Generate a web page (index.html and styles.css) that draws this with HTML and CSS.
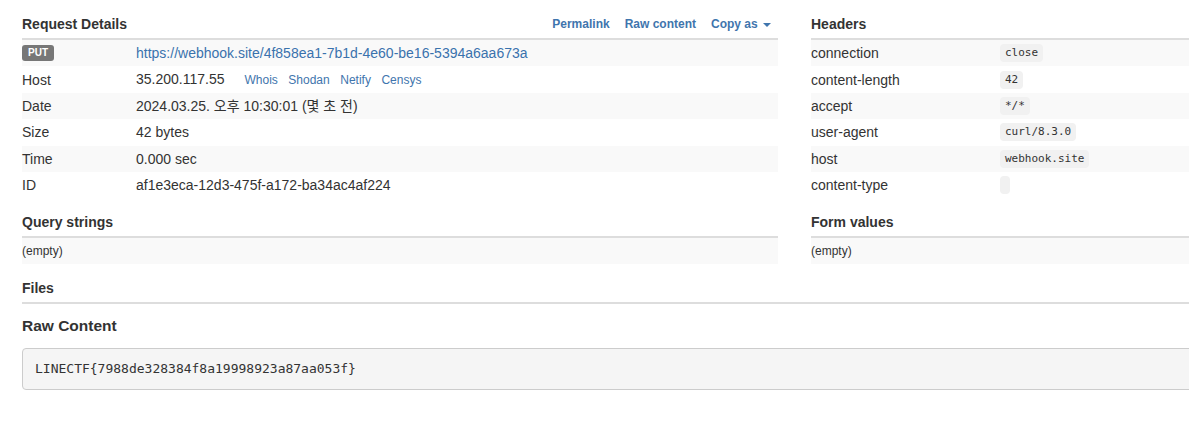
FILE: index.html
```html
<!DOCTYPE html>
<html lang="ko">
<head>
<meta charset="utf-8">
<title>Request Details</title>
<link rel="stylesheet" href="styles.css">
</head>
<body>
<div class="page">
  <div class="grid">
    <section class="panel">
      <div class="panel-head">
        <h3 class="title">Request Details</h3>
        <nav class="head-links">
          <a class="head-link" href="#">Permalink</a>
          <a class="head-link" href="#">Raw content</a>
          <a class="head-link" href="#">Copy as <span class="caret"></span></a>
        </nav>
      </div>
      <table class="kv kv-left">
        <tr><td class="k"><span class="method">PUT</span></td><td class="v"><a class="url" href="#">https://webhook.site/4f858ea1-7b1d-4e60-be16-5394a6aa673a</a></td></tr>
        <tr><td class="k">Host</td><td class="v">35.200.117.55<span class="ip-links"><a href="#">Whois</a><a href="#">Shodan</a><a href="#">Netify</a><a href="#">Censys</a></span></td></tr>
        <tr><td class="k">Date</td><td class="v">2024.03.25. 오후 10:30:01 (몇 초 전)</td></tr>
        <tr><td class="k">Size</td><td class="v">42 bytes</td></tr>
        <tr><td class="k">Time</td><td class="v">0.000 sec</td></tr>
        <tr><td class="k">ID</td><td class="v">af1e3eca-12d3-475f-a172-ba34ac4af224</td></tr>
      </table>
    </section>
    <section class="panel">
      <div class="panel-head">
        <h3 class="title">Headers</h3>
      </div>
      <table class="kv kv-right">
        <tr><td class="k">connection</td><td class="v"><code class="code">close</code></td></tr>
        <tr><td class="k">content-length</td><td class="v"><code class="code">42</code></td></tr>
        <tr><td class="k">accept</td><td class="v"><code class="code">*/*</code></td></tr>
        <tr><td class="k">user-agent</td><td class="v"><code class="code">curl/8.3.0</code></td></tr>
        <tr><td class="k">host</td><td class="v"><code class="code">webhook.site</code></td></tr>
        <tr><td class="k">content-type</td><td class="v"><code class="code"></code></td></tr>
      </table>
    </section>
    <section class="panel">
      <div class="panel-head"><h3 class="title">Query strings</h3></div>
      <div class="empty">(empty)</div>
    </section>
    <section class="panel">
      <div class="panel-head"><h3 class="title">Form values</h3></div>
      <div class="empty">(empty)</div>
    </section>
  </div>
  <section class="panel">
    <div class="panel-head"><h3 class="title">Files</h3></div>
  </section>
  <section class="raw">
    <h3 class="raw-title">Raw Content</h3>
    <pre class="raw-box">LINECTF{7988de328384f8a19998923a87aa053f}</pre>
  </section>
</div>
</body>
</html>
```

FILE: styles.css
```css
html, body {
  margin: 0;
  padding: 0;
  overflow: hidden;
  background: #fff;
}

body {
  font-family: "Liberation Sans", Arial, "Noto Sans CJK KR", sans-serif;
  font-size: 14px;
  color: #333;
}

a {
  color: #337ab7;
  text-decoration: none;
}

.page {
  width: 1240px;
  padding-left: 22px;
  box-sizing: border-box;
}

.grid {
  display: grid;
  grid-template-columns: 756px 1fr;
  column-gap: 33px;
}

.panel-head {
  display: flex;
  align-items: flex-end;
  justify-content: space-between;
  padding: 14px 0 4px;
  border-bottom: 2px solid #ddd;
}

.title {
  margin: 0;
  font-size: 14px;
  line-height: 20px;
  font-weight: bold;
  color: #333;
}

.head-links {
  display: flex;
  gap: 15px;
  padding-right: 7px;
}

.head-link {
  font-size: 12px;
  font-weight: bold;
  line-height: 20px;
  color: #3f75ad;
}

.caret {
  display: inline-block;
  width: 0;
  height: 0;
  margin-left: 2px;
  vertical-align: middle;
  border-top: 4px solid #3f75ad;
  border-left: 4px solid transparent;
  border-right: 4px solid transparent;
}

.kv {
  width: 100%;
  border-collapse: collapse;
}

.kv td {
  padding: 0;
  height: 26.4px;
  line-height: 18px;
  vertical-align: middle;
  white-space: nowrap;
}

.kv tr:nth-child(odd) td {
  background: #f9f9f9;
}

.kv-left .k { width: 114px; }
.kv-right .k { width: 189px; }

.method {
  display: inline-block;
  background: #777;
  color: #fff;
  font-size: 10px;
  font-weight: bold;
  line-height: 16px;
  padding: 0 6px;
  border-radius: 3px;
  vertical-align: top;
  margin-top: 1px;
}

.url {
  color: #3a72ad;
}

.ip-links {
  margin-left: 20px;
  font-size: 12px;
}

.ip-links a {
  margin-right: 10.5px;
  color: #3f75ad;
}

.code {
  display: inline-block;
  font-family: "DejaVu Sans Mono", "Liberation Mono", monospace;
  font-size: 11px;
  line-height: 14px;
  min-height: 14px;
  padding: 2px 5px;
  background: #f1f1f1;
  color: #333;
  border-radius: 4px;
  vertical-align: top;
  box-sizing: border-box;
  height: 18px;
}

.empty {
  background: #f9f9f9;
  font-size: 12px;
  line-height: 18px;
  padding: 4px 0;
}

.raw-title {
  margin: 0;
  padding-top: 11px;
  font-size: 15.5px;
  line-height: 22px;
  font-weight: bold;
  color: #333;
}

.raw-box {
  margin: 11px 0 0;
  padding: 10px 12px;
  font-family: "DejaVu Sans Mono", "Liberation Mono", monospace;
  font-size: 13px;
  line-height: 20px;
  color: #333;
  background: #f5f5f5;
  border: 1px solid #ccc;
  border-radius: 4px;
}
```
